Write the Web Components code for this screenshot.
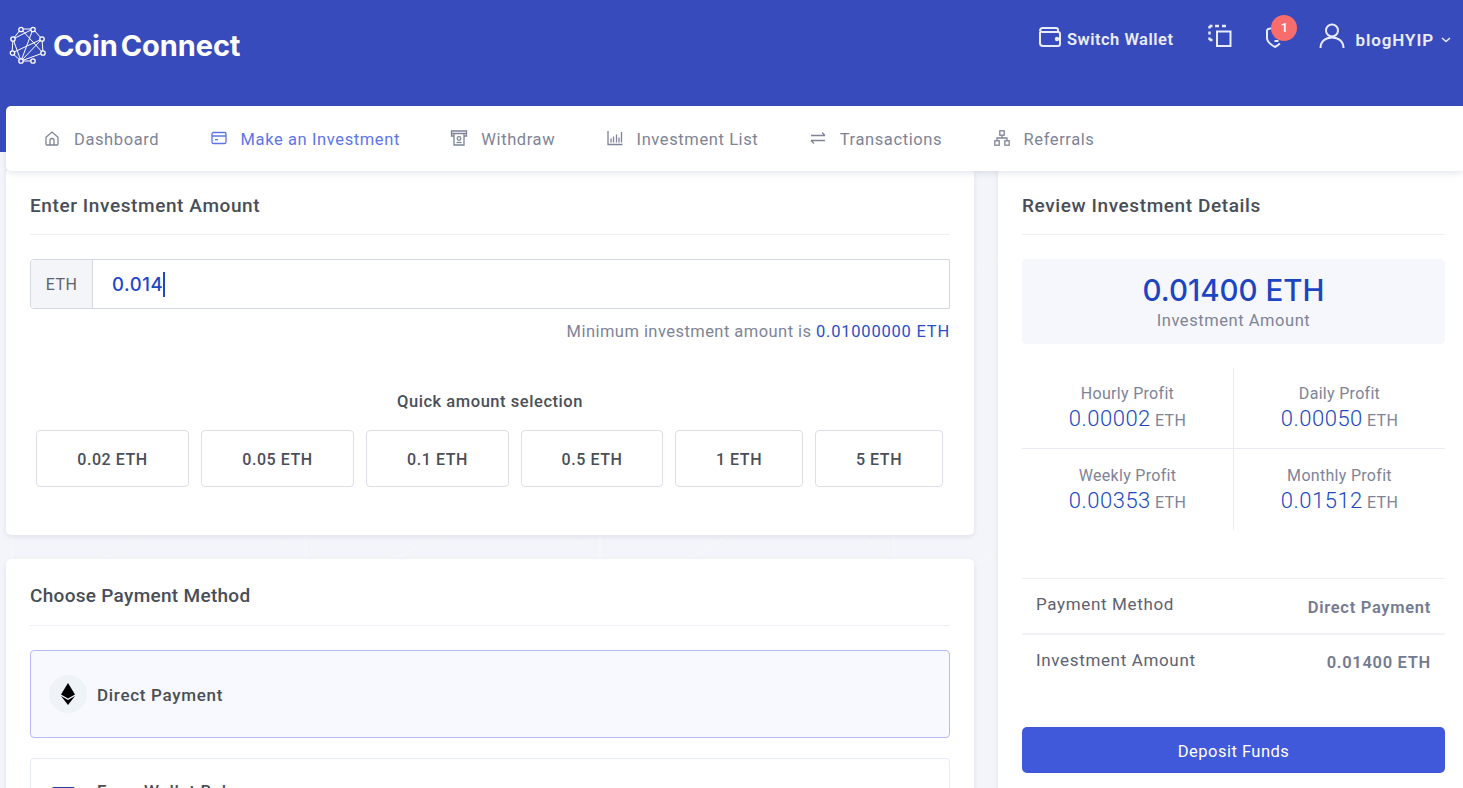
<!DOCTYPE html>
<html>
<head>
<meta charset="utf-8">
<title>Make an Investment</title>
<style>
  html, body { margin: 0; height: 100%; overflow: hidden; }
  body {
    color: #4a4f57;
    font: 16.5px/1.5 Roboto, "Liberation Sans", sans-serif;
    background: #f4f5fa url("data:image/svg+xml,%3Csvg xmlns='http://www.w3.org/2000/svg' width='294' height='294'%3E%3Cpath d='M12 0V294M60 290L160 230M250 220L310 270' fill='none' stroke='%23f7f8fc' stroke-width='1'/%3E%3C/svg%3E");
  }
</style>
</head>
<body>
<app-header></app-header>
<app-nav>
  <nav-item icon="home">Dashboard</nav-item>
  <nav-item icon="card" active>Make an Investment</nav-item>
  <nav-item icon="atm">Withdraw</nav-item>
  <nav-item icon="bars">Investment List</nav-item>
  <nav-item icon="swap">Transactions</nav-item>
  <nav-item icon="tree">Referrals</nav-item>
</app-nav>
<page-body>
  <div slot="left">
    <app-card heading="Enter Investment Amount">
      <amount-input value="0.014" unit="ETH"></amount-input>
      <quick-amounts>
        <quick-button>0.02 ETH</quick-button>
        <quick-button>0.05 ETH</quick-button>
        <quick-button>0.1 ETH</quick-button>
        <quick-button>0.5 ETH</quick-button>
        <quick-button>1 ETH</quick-button>
        <quick-button>5 ETH</quick-button>
      </quick-amounts>
    </app-card>
    <app-card heading="Choose Payment Method" style="margin-top:24px;--title-top:26px;--title-pad:18px;--title-ls:.3px">
      <pay-option icon="eth" selected>Direct Payment</pay-option>
      <pay-option icon="wallet">From Wallet Balance</pay-option>
    </app-card>
  </div>
  <review-panel slot="right"></review-panel>
</page-body>

<script>
const ICONS = {
  home: '<path d="M3 8.200 9 3l6 5.200V15a1 1 0 0 1-1 1H4a1 1 0 0 1-1-1z"/><path d="M7 16v-4.500a2 2 0 0 1 4 0V16"/>',
  card: '<rect x="2" y="3.500" width="14" height="11" rx="1.600"/><path d="M2 7h14M5 10.700h3"/>',
  atm: '<path d="M4 7H1.500V2h15v5H14M1.500 4.500h15M4 5v11h10V5"/><circle cx="9" cy="9.500" r="1.800"/><path d="M6.500 13.500h5"/>',
  bars: '<path d="M2 2V15.500H16.500M5 13.500V9.500M7.500 13.500V7.500M10.500 13.500V5.500M13 13.500V8.500M15.500 13.500V3"/>',
  swap: '<path d="M2 11.500h14M2 11.500l3 3M16 6.500H2M16 6.500l-3-3"/>',
  tree: '<rect x="6.800" y="1.800" width="4.400" height="4.400"/><rect x="1.800" y="11.800" width="4.400" height="4.400"/><rect x="11.800" y="11.800" width="4.400" height="4.400"/><path d="M9 6.200V9M4 11.800V9h10v2.800"/>'
};

function define(name, css, html) {
  customElements.define(name, class extends HTMLElement {
    constructor() {
      super();
      this.attachShadow({ mode: 'open' });
    }
    connectedCallback() {
      if(this.shadowRoot.firstChild) return;
      this.shadowRoot.innerHTML = `<style>${css}</style>` + (typeof html === 'function' ? html(this) : html);
    }
  });
}

define('app-header', `
  :host { display: block; height: 152px; background: #384bbd; color: #e9ecfa; }
  .bar { display: flex; align-items: flex-start; height: 80px; padding: 0 12px 0 9px; }
  .logo { display: flex; align-items: center; gap: 5px; margin-top: 27px; color: #fff; }
  .logo svg { margin-top: -2px; }
  .logo span { font: 700 29px/38px Inter, sans-serif; letter-spacing: -.1px; }
  .logo b { font-weight: 700; margin-left: 3px; }
  .right { margin-left: auto; display: flex; align-items: center; height: 80px; font-weight: 600; }
  .wallet { display: flex; align-items: center; letter-spacing: .5px; }
  .wallet svg { margin: 0 5px 6px 0; }
  svg { display: block; fill: none; stroke: currentColor; stroke-width: 2; }
  .copy { margin: 0 0 8px 35px; }
  .shield { position: relative; margin: 0 0 6px 33px; }
  .badge { position: absolute; left: 6px; top: -10px; width: 26px; height: 26px; border-radius: 50%; background: #f96c6c; color: #fff; font: 500 13px/26px Roboto, sans-serif; text-align: center; }
  .user { display: flex; align-items: center; margin-left: 34px; }
  .user .face { margin-bottom: 10px; }
  .user span { margin: 2px 0 0 10px; font-size: 17px; letter-spacing: .9px; }
`, `
  <div class="bar">
    <div class="logo">
      <svg width="39" height="39" viewBox="0 0 39 39" style="stroke-width:1">
        <path d="M12 3 4 13 3 27 12 35 24 35M12 3 24 3 33 13 34 27 12 35M24 3 4 13M12 3 34 27M24 3 12 35M33 13 3 27M33 13 12 35M4 13 12 35"/>
        <g fill="#384bbd" stroke-width="1.300"><circle cx="12" cy="3.500" r="2.200"/><circle cx="24" cy="3.500" r="2.200"/><circle cx="33" cy="13" r="2.200"/><circle cx="34" cy="27" r="2.200"/><circle cx="4" cy="13" r="2.200"/><circle cx="3.500" cy="27" r="2.200"/><circle cx="12" cy="35" r="2.200"/><circle cx="24" cy="35" r="2.200"/></g>
      </svg>
      <span>Coin<b>Connect</b></span>
    </div>
    <div class="right">
      <div class="wallet">
        <svg width="24" height="20" viewBox="0 0 24 20"><path d="M2 5v11a3 3 0 0 0 3 3h15a2 2 0 0 0 2-2V7a2 2 0 0 0-2-2H4.500A2.500 2.500 0 0 1 2 3.500 2.500 2.500 0 0 1 4.500 1H18a2 2 0 0 1 2 2v2"/><circle cx="19" cy="12" r="1.200" fill="currentColor"/></svg>
        Switch Wallet
      </div>
      <svg class="copy" width="24" height="24" viewBox="0 0 24 24"><rect x="9" y="7.500" width="13.500" height="14.500"/><path d="M1.500 2h3M7 2h4M14 2h4M1.500 2v2.500M1.500 7.500v3M1.500 13.500v2.500M1.500 16h3" stroke-width="2.400"/></svg>
      <div class="shield">
        <svg width="20" height="24" viewBox="0 0 20 24"><path d="M2 4.500 10 2l8 2.500V13M2 4.500V13c0 4 3.500 6.500 8 9 2-1.100 3.600-2.200 4.800-3.500M9.500 16h4"/></svg>
        <div class="badge">1</div>
      </div>
      <div class="user">
        <svg class="face" width="26" height="25" viewBox="0 0 26 25"><circle cx="13" cy="7.500" r="6"/><path d="M1.500 25c0-6.500 5-10.500 11.500-10.500S24.500 18.500 24.500 25"/></svg>
        <span>blogHYIP</span>
        <svg width="10" height="6" viewBox="0 0 10 6" style="margin-left:7px;stroke-width:1.500"><path d="M1 1l4 3.500L9 1"/></svg>
      </div>
    </div>
  </div>
`);

define('app-nav', `
  :host { display: flex; position: relative; z-index: 2; height: 65px; margin: -46px 0 0 6px; padding-left: 37px; background: #fff; align-items: center; gap: 50.400px; border-radius: 5px 0 0 5px; box-shadow: 0 2px 6px rgba(60,70,110,.14); }
`, '<slot></slot>');

define('nav-item', `
  :host { display: flex; align-items: center; gap: 13px; color: #7e8497; letter-spacing: .6px; white-space: nowrap; padding-top: 3px; }
  :host([active]) { color: #5e75e8; }
  svg { width: 18px; height: 18px; fill: none; stroke: currentColor; stroke-width: 1.300; display: block; margin-top: -4px; }
`, el => `<svg viewBox="0 0 18 18">${ICONS[el.getAttribute('icon')]}</svg><slot></slot>`);

define('page-body', `
  :host { display: grid; grid-template-columns: 968px 465px; column-gap: 24px; margin: -3px 0 0 6px; }
`, '<slot name="left"></slot><slot name="right"></slot>');

define('app-card', `
  :host { display: block; background: #fff; border-radius: 5px; padding: 0 24px 24px; box-shadow: 0 2px 5px rgba(60,70,110,.1); }
  h2 { margin: 0 0 24px; padding: var(--title-top, 27px) 0 var(--title-pad, 17px); height: 22px; border-bottom: 1px solid #eef0f6; font: 500 19px/22px Roboto, sans-serif; letter-spacing: var(--title-ls, .6px); color: #484e58; }
`, el => `<h2>${el.getAttribute('heading')}</h2><slot></slot>`);

define('amount-input', `
  :host { display: block; }
  .group { display: flex; height: 50px; box-sizing: border-box; border: 1px solid #d4d8e3; border-radius: 4px 0 0 4px; }
  .unit { width: 62px; box-sizing: border-box; padding-top: 1px; background: #f4f5f8; border-right: 1px solid #d4d8e3; color: #5f636b; text-align: center; line-height: 47px; border-radius: 3px 0 0 3px; font-size: 16px; letter-spacing: .5px; }
  .val { padding: 1px 0 0 19px; font: 500 18.500px/47px Inter, sans-serif; color: #1f47c4; display: flex; align-items: center; letter-spacing: .6px; }
  .caret { width: 2px; height: 25px; background: #1f47c4; }
  .hint { text-align: right; margin-top: 11px; color: #7e8497; letter-spacing: .45px; line-height: 24px; }
  .hint b { font-weight: 400; color: #2a50c8; letter-spacing: .78px; }
`, el => `
  <div class="group">
    <div class="unit">${el.getAttribute('unit')}</div>
    <div class="val">${el.getAttribute('value')}<span class="caret"></span></div>
  </div>
  <div class="hint">Minimum investment amount is <b>0.01000000 ETH</b></div>
`);

define('quick-amounts', `
  :host { display: block; margin-top: 46px; text-align: center; }
  .t { font-weight: 500; line-height: 24px; letter-spacing: .55px; color: #4a4f57; }
  .row { display: grid; grid-template-columns: 153px 153px 143px 142px 128px 128px; gap: 12px; margin: 16px 6px 0; padding-bottom: 24px; }
`, '<div class="t">Quick amount selection</div><div class="row"><slot></slot></div>');

define('quick-button', `
  :host { display: block; height: 57px; box-sizing: border-box; border: 1px solid #dcdfe9; border-radius: 4px; text-align: center; line-height: 57px; font-size: 16px; font-weight: 500; color: #4a4f57; letter-spacing: .55px; background: #fff; }
`, '<slot></slot>');

define('pay-option', `
  :host { display: flex; align-items: center; height: 88px; box-sizing: border-box; padding-left: 18px; gap: 10px; border: 1px solid #e6e8fb; border-radius: 4px; margin-bottom: 20px; font-size: 17px; font-weight: 500; letter-spacing: .7px; color: #4a4f57; }
  :host([selected]) { background: #f7f9fe; border-color: #b6baf5; }
  :host(:not([selected])) { align-items: flex-start; padding: 20px 0 0 21px; gap: 22px; }
  .ic { width: 38px; height: 38px; border-radius: 50%; background: #eef3f8; display: flex; align-items: center; justify-content: center; }
  .t { margin-top: 4px; }
  .w { display: block; margin-top: 8px; }
  .w + .t { margin-top: 0; }
`, el => el.getAttribute('icon') === 'eth'
  ? `<div class="ic"><svg width="14" height="22" viewBox="0 0 14 22"><path d="M7 0 14 11.500 7 15.500 0 11.500z"/><path d="M0 13 7 17 14 13 7 22z"/></svg></div><span class="t"><slot></slot></span>`
  : `<svg class="w" width="23" height="18" viewBox="0 0 23 18"><rect width="23" height="18" rx="2" fill="#24439e"/></svg><span class="t"><slot></slot></span>`);

define('review-panel', `
  :host { display: block; background: #fff; padding: 27px 18px 24px 24px; min-height: 700px; box-shadow: 0 2px 5px rgba(60,70,110,.1); }
  h2 { margin: 0 0 24px; padding-bottom: 17px; height: 22px; border-bottom: 1px solid #eef0f6; font: 500 19px/22px Roboto, sans-serif; letter-spacing: .6px; color: #484e58; }
  .hero { height: 85px; background: #f5f7fd; border-radius: 5px; text-align: center; padding-top: 13px; box-sizing: border-box; color: #7e8497; letter-spacing: .55px; line-height: 24px; }
  .hero b { display: block; font: 500 29.500px/36px Inter, sans-serif; color: #1c45c4; letter-spacing: 0; margin-bottom: 1px; }
  .grid { display: grid; grid-template-columns: 212px 211px; margin-top: 24px; }
  .cell { height: 81px; box-sizing: border-box; text-align: center; padding-top: 15px; font-size: 16px; color: #7e8497; line-height: 22px; letter-spacing: .3px; }
  .cell:nth-child(odd) { border-right: 1px solid #e9ebf2; }
  .cell:nth-child(-n+2) { border-bottom: 1px solid #e9ebf2; }
  .cell:nth-child(n+3) { padding-top: 16px; }
  .cell div { line-height: 28px; }
  .cell b { font: 300 22px/28px Roboto, sans-serif; color: #2046c2; letter-spacing: .5px; }
  .rows { margin-top: 48px; border-top: 1px solid #eef0f6; }
  .r { display: flex; justify-content: space-between; height: 56px; box-sizing: border-box; padding: 12px 14px 0; border-bottom: 2px solid #f1f2f7; color: #5d6270; font-size: 17px; letter-spacing: .65px; line-height: 26px; }
  .r:last-child { border-bottom: 0; }
  .r b { font-weight: 600; font-size: 16.500px; letter-spacing: .7px; margin-top: 3px; color: #737a92; }
  .r:first-child b { margin-top: 4px; }
  button { display: block; width: 100%; height: 46px; margin-top: 36px; padding-top: 3px; border: 0; border-radius: 5px; background: #4058da; color: #fff; font: 400 16.500px Roboto, sans-serif; letter-spacing: .5px; }
`, () => `
  <h2>Review Investment Details</h2>
  <div class="hero"><b>0.01400 ETH</b>Investment Amount</div>
  <div class="grid">
    <div class="cell">Hourly Profit<div><b>0.00002</b> ETH</div></div>
    <div class="cell">Daily Profit<div><b>0.00050</b> ETH</div></div>
    <div class="cell">Weekly Profit<div><b>0.00353</b> ETH</div></div>
    <div class="cell">Monthly Profit<div><b>0.01512</b> ETH</div></div>
  </div>
  <div class="rows">
    <div class="r">Payment Method<b>Direct Payment</b></div>
    <div class="r">Investment Amount<b>0.01400 ETH</b></div>
  </div>
  <button>Deposit Funds</button>
`);
</script>
</body>
</html>
